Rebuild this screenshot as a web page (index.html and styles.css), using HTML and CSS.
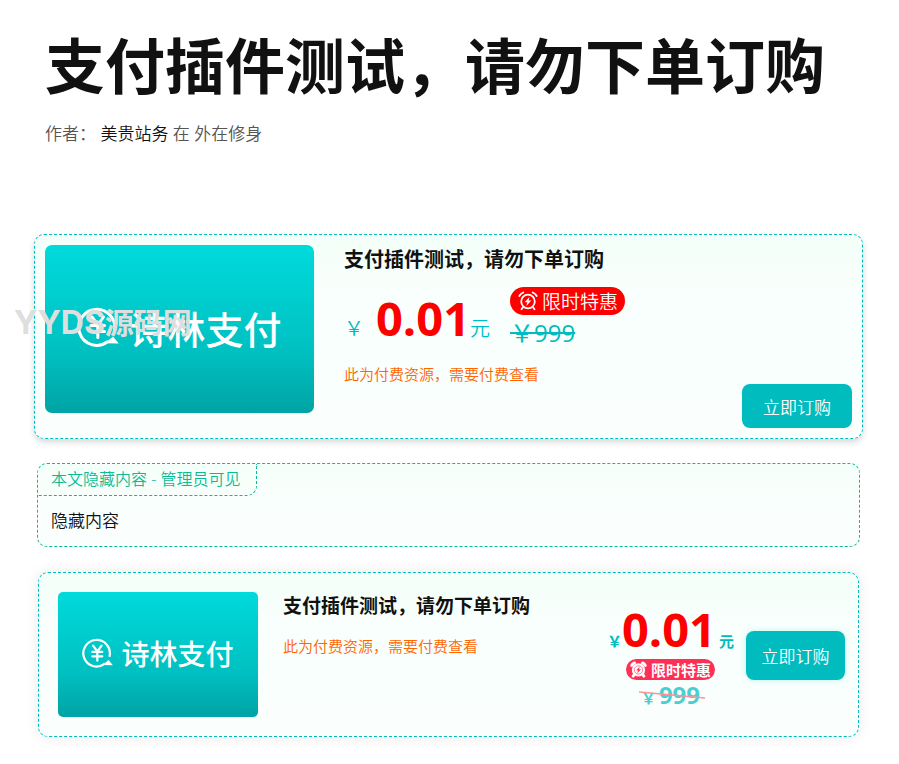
FILE: index.html
```html
<!DOCTYPE html>
<html lang="zh-CN">
<head>
<meta charset="utf-8">
<meta name="viewport" content="width=device-width, initial-scale=1">
<title>支付插件测试，请勿下单订购</title>
<link rel="stylesheet" href="styles.css">
</head>
<body>
<svg class="defs" aria-hidden="true">
  <symbol id="clock" viewBox="0 0 20 20">
    <g fill="none" stroke="currentColor" stroke-width="1.8" stroke-linecap="round" stroke-linejoin="round">
      <circle cx="10" cy="10.5" r="6.8"/>
      <path d="M1.3 5Q2.6 2.5 5.3 1.5M14.7 1.5Q17.4 2.5 18.7 5M5 16.2 3.5 18.2M15 16.2l1.5 2"/>
    </g>
    <path fill="currentColor" d="M11.4 6 6.7 11.2h2.6L8.4 15l4.9-5.5h-2.7z"/>
  </symbol>
  <symbol id="clock-solid" viewBox="0 0 20 20">
    <circle cx="10" cy="10.5" r="7.8" fill="currentColor"/>
    <path fill="none" stroke="currentColor" stroke-width="3.4" stroke-linecap="round" d="M2 5.2Q3 3.2 5.3 2.3M14.7 2.3Q17 3.2 18 5.2M5 16l-1.3 1.8M15 16l1.3 1.8"/>
    <circle cx="10" cy="10.5" r="4.9" fill="none" stroke="#ff2f55" stroke-width=".7"/>
    <path fill="#ff2f55" d="M11.5 6.6 7.2 11.2h2.3l-1 3.4 4.5-4.9h-2.4z"/>
  </symbol>
  <symbol id="pay" viewBox="0 0 42 40">
    <g fill="none" stroke="currentColor" stroke-width="3" stroke-linecap="round" stroke-linejoin="round">
      <path d="M37.4 24A18 18 0 1 0 30.5 34.8"/>
      <path d="M15 10l5.8 8L26.500 10M14 18.500h13.500M14 24.500h13.500M20.800 18v12.500"/>
    </g>
    <path fill="currentColor" d="M28 36.200 36 29.500l5.800 7z"/>
  </symbol>
</svg>
<main class="page">
  <header class="post-head">
    <h1>支付插件测试，请勿下单订购</h1>
    <p class="meta">作者： <a href="#author">美贵站务</a> 在 <a class="cat" href="#category">外在修身</a></p>
  </header>

  <section class="card card-large">
    <div class="cover">
      <svg class="cover-icon"><use href="#pay"/></svg><span>诗林支付</span>
      <div class="watermark">YYDS<span>源码网</span></div>
    </div>
    <div class="info">
      <h2>支付插件测试，请勿下单订购</h2>
      <div class="price-row">
        <div class="price"><span class="yen">￥</span><strong>0.01</strong><span>元</span></div>
        <div class="offer">
          <span class="badge"><svg><use href="#clock"/></svg>限时特惠</span>
          <del>￥999</del>
        </div>
      </div>
      <p class="note">此为付费资源，需要付费查看</p>
    </div>
    <button class="buy" type="button">立即订购</button>
  </section>

  <section class="hidden-box">
    <h3>本文隐藏内容 - 管理员可见</h3>
    <p>隐藏内容</p>
  </section>

  <section class="card card-small">
    <div class="cover">
      <svg class="cover-icon"><use href="#pay"/></svg><span>诗林支付</span>
    </div>
    <div class="info">
      <h2>支付插件测试，请勿下单订购</h2>
      <p class="note">此为付费资源，需要付费查看</p>
    </div>
    <div class="deal">
      <div class="price"><span>￥</span><strong>0.01</strong><span class="unit">元</span></div>
      <span class="badge"><svg><use href="#clock-solid"/></svg>限时特惠</span>
      <div class="old"><span>￥</span>999<svg class="slash" viewBox="0 0 66 8" preserveAspectRatio="none"><path d="M0 1 66 7" stroke="#f66" stroke-width="1.3"/></svg></div>
    </div>
    <button class="buy" type="button">立即订购</button>
  </section>
</main>
</body>
</html>
```
FILE: styles.css
```css
:root { --teal: #00bcbe; }
* { box-sizing: border-box; }
body {
  margin: 0;
  background: #fff;
  color: #111;
  font-family: "Open Sans", "Noto Sans CJK SC", sans-serif;
  font-size: 17px;
  font-weight: 350;
}
h1, h2, h3, p { margin: 0; }
.defs { position: absolute; width: 0; height: 0; }
.page { padding: 30px 36px 24px 34px; }

.post-head { padding-left: 11px; margin-bottom: 86px; }
h1 { font-size: 60px; line-height: 72px; font-weight: 700; }
.meta { margin-top: 18px; line-height: 28px; color: #555; }
.meta a { color: #111; text-decoration: none; }
.meta .cat { color: #555; }

.card {
  display: flex;
  border: 1px dashed var(--teal);
  border-radius: 10px;
  background: linear-gradient(#f3fff8, #f9fffd 32%, #fafffe);
}
.card-large {
  min-height: 205px;
  padding: 10px;
  gap: 30px;
  box-shadow: 0 3px 6px rgba(0, 0, 0, .16);
}
.cover {
  position: relative;
  display: flex;
  flex: none;
  align-items: center;
  justify-content: center;
  padding-bottom: 4px;
  color: #fff;
  font-weight: 500;
  background: linear-gradient(#00dadb, #00c0c1 64%, #00a3a4);
}
.card-large .cover { width: 269px; height: 168px; border-radius: 7px; font-size: 38px; gap: 10px; }
.card-large .cover-icon { width: 42px; height: 40px; }
.watermark {
  position: absolute;
  left: -31px;
  top: 54px;
  line-height: 48px;
  white-space: nowrap;
  font-family: Inter, "Noto Sans CJK SC", sans-serif;
  font-size: 32px;
  font-weight: 700;
  color: #dedede;
}
.watermark span { font-size: 29px; }
.info { flex: 1; min-width: 0; }
h2 { font-size: 20px; line-height: 30px; font-weight: 700; }
.price-row { display: flex; gap: 20px; margin-top: 8px; }
.price { display: flex; align-items: baseline; color: var(--teal); font-size: 20px; line-height: 24px; }
.price strong { color: #f00; font-size: 47px; line-height: 70px; font-weight: 700; }
.card-large .yen { margin-right: 12px; }
.offer { display: flex; flex-direction: column; align-items: flex-start; padding-top: 4px; }
.badge { display: inline-flex; align-items: center; color: #fff; white-space: nowrap; }
.card-large .badge {
  height: 28px;
  padding: 0 7px 0 8px;
  gap: 4px;
  border-radius: 14px;
  background: #f00;
  font-size: 19px;
}
.card-large .badge svg { width: 20px; height: 20px; }
.offer del { color: var(--teal); font-size: 24px; line-height: 36px; font-weight: 400; }
.note { color: #f60; font-size: 15px; line-height: 24px; }
.card-large .note { margin-top: 9px; }
.buy {
  flex: none;
  border: 0;
  border-radius: 8px;
  background: var(--teal);
  color: #fff;
  font: inherit;
}
.card-large .buy { align-self: flex-end; width: 110px; height: 44px; }

.hidden-box {
  margin: 24px 3px 25px;
  border: 1px dashed #0abb96;
  border-radius: 10px;
  background: linear-gradient(#f5fff9, #fafffd 50%);
}
.hidden-box h3 {
  width: fit-content;
  padding: 0 16px 0 13px;
  border: 1px dashed #0abb96;
  border-width: 0 1px 1px 0;
  border-radius: 0 0 10px 0;
  color: #0abb96;
  font-size: 16px;
  font-weight: 350;
  line-height: 31px;
}
.hidden-box p { padding: 12px 13px; line-height: 26px; }

.card-small {
  min-height: 165px;
  margin: 0 4px;
  padding: 19px 13px 18px 19px;
  box-shadow: 0 0 14px rgba(0, 0, 0, .09);
}
.card-small .cover { width: 200px; height: 125px; border-radius: 5px; font-size: 28px; gap: 8px; }
.card-small .cover-icon { width: 31px; height: 30px; }
.card-small .info { margin-left: 25px; }
.card-small h2 { font-size: 19px; line-height: 28px; }
.card-small .note { margin-top: 14px; }
.deal {
  display: flex;
  flex-direction: column;
  align-items: center;
  margin-right: 12px;
  font-weight: 700;
}
.deal .price { height: 67px; padding-top: 2px; font-size: 15px; }
.deal .unit { margin-left: 3px; }
.deal .badge {
  height: 21px;
  padding: 0 4px;
  gap: 4px;
  border-radius: 11px;
  background: #ff2f55;
  font-size: 15px;
}
.deal .badge svg { width: 17px; height: 17px; }
.old { position: relative; color: var(--teal); font-size: 24px; line-height: 30px; opacity: .7; }
.old span { font-size: 15px; margin-right: 3px; }
.slash { position: absolute; left: -2px; top: 11px; width: 66px; height: 8px; }
.card-small .buy { align-self: center; width: 99px; height: 49px; box-shadow: 0 0 6px rgba(0, 220, 200, .25); }
```
